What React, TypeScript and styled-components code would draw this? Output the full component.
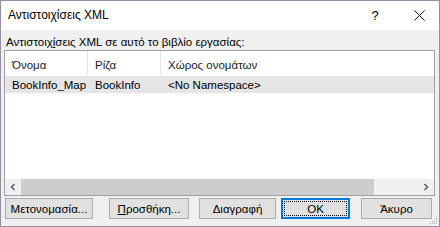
import * as React from "react";
import styled, { createGlobalStyle } from "styled-components";

const GlobalStyle = createGlobalStyle`
  html, body {
    margin: 0;
    padding: 0;
    background: #ffffff;
  }
  * {
    box-sizing: border-box;
  }
`;

const Window = styled.div`
  width: 440px;
  height: 227px;
  border: 1px solid #978ea6;
  display: flex;
  flex-direction: column;
  font-family: "Liberation Sans", Arial, sans-serif;
  font-size: 11.5px;
  color: #000;
  overflow: hidden;
  position: relative;
`;

const TitleBar = styled.div`
  height: 29px;
  background: #ffffff;
  display: flex;
  align-items: center;
  padding-left: 7px;
  flex-shrink: 0;
`;

const Title = styled.div`
  flex: 1;
  font-size: 12px;
  line-height: 1;
  padding-bottom: 1px;
`;

const TitleButton = styled.div<{ $w: number }>`
  width: ${(p) => p.$w}px;
  height: 29px;
  display: flex;
  align-items: center;
  justify-content: center;
  font-size: 13px;
`;

const Body = styled.div`
  flex: 1;
  background: #f0f0f0;
  display: flex;
  flex-direction: column;
  padding: 5px 4px 0 3px;
`;

const Label = styled.div`
  line-height: 15px;
  padding-left: 2px;
  height: 15px;
`;

const ListBox = styled.div`
  height: 146px;
  border: 1px solid #a0a0a0;
  background: #ffffff;
  display: flex;
  flex-direction: column;
`;

const Header = styled.div`
  display: flex;
  height: 24px;
  flex-shrink: 0;
`;

const HeaderCell = styled.div<{ $w?: number }>`
  ${(p) => (p.$w ? `width: ${p.$w}px;` : "flex: 1;")}
  border-right: 1px solid #e5e5e5;
  padding: 4px 0 0 7px;
  display: flex;
  align-items: center;
  color: #1a1a1a;
  &:last-child {
    border-right: none;
  }
`;

const Row = styled.div<{ $selected?: boolean }>`
  display: flex;
  height: 17px;
  margin-top: 1px;
  background: ${(p) => (p.$selected ? "#e5e5e5" : "transparent")};
`;

const Cell = styled.div<{ $w?: number }>`
  ${(p) => (p.$w ? `width: ${p.$w}px;` : "flex: 1;")}
  padding-left: 7px;
  display: flex;
  align-items: center;
  white-space: nowrap;
`;

const Spacer = styled.div`
  flex: 1;
`;

const HScroll = styled.div`
  height: 16px;
  display: flex;
  align-items: stretch;
  background: #f0f0f0;
  flex-shrink: 0;
`;

const ScrollArrow = styled.div`
  width: 16px;
  display: flex;
  align-items: center;
  justify-content: center;
`;

const Track = styled.div`
  flex: 1;
  display: flex;
  align-items: stretch;
`;

const Thumb = styled.div<{ $pct: number }>`
  width: ${(p) => p.$pct}%;
  background: #cdcdcd;
`;

const ButtonRow = styled.div`
  display: flex;
  margin-top: 2px;
  height: 21px;
`;

const Button = styled.div<{ $w: number; $ml: number; $default?: boolean }>`
  width: ${(p) => p.$w}px;
  margin-left: ${(p) => p.$ml}px;
  height: 21px;
  background: #e1e1e1;
  border: 1px solid ${(p) => (p.$default ? "#0078d7" : "#adadad")};
  display: flex;
  align-items: center;
  justify-content: center;
  position: relative;
  ${(p) =>
    p.$default
      ? `
    box-shadow: inset 0 0 0 1px #0078d7;
    &::after {
      content: "";
      position: absolute;
      left: 2px;
      top: 2px;
      right: 2px;
      bottom: 2px;
      border: 1px dotted #000;
    }
  `
      : ""}
`;

const Grip = styled.svg`
  position: absolute;
  right: 1px;
  bottom: 1px;
`;

function Arrow({ dir }: { dir: "left" | "right" }) {
  return (
    <svg width="6" height="8" viewBox="0 0 6 8">
      {dir === "left" ? (
        <path d="M4.5 1 L1.5 4 L4.5 7" stroke="#606060" strokeWidth="1.6" fill="none" />
      ) : (
        <path d="M1.5 1 L4.5 4 L1.5 7" stroke="#606060" strokeWidth="1.6" fill="none" />
      )}
    </svg>
  );
}

const gripDots = [
  [8, 2],
  [6, 4],
  [8, 4],
  [4, 6],
  [6, 6],
  [8, 6],
  [2, 8],
  [4, 8],
  [6, 8],
  [8, 8],
];

export default function App() {
  return (
    <>
      <GlobalStyle />
      <Window>
        <TitleBar>
          <Title>Αντιστοιχίσεις XML</Title>
          <TitleButton $w={48}>?</TitleButton>
          <TitleButton $w={40}>
            <svg width="11" height="11" viewBox="0 0 11 11">
              <path d="M0.5 0.5 L10.5 10.5 M10.5 0.5 L0.5 10.5" stroke="#111" strokeWidth="1" />
            </svg>
          </TitleButton>
        </TitleBar>
        <Body>
          <Label>
            Αντιστοιχ<u>ί</u>σεις XML σε αυτό το βιβλίο εργασίας:
          </Label>
          <ListBox>
            <Header>
              <HeaderCell $w={83}>Όνομα</HeaderCell>
              <HeaderCell $w={73}>Ρίζα</HeaderCell>
              <HeaderCell>Χώρος ονομάτων</HeaderCell>
            </Header>
            <Row $selected>
              <Cell $w={83}>BookInfo_Map</Cell>
              <Cell $w={73}>BookInfo</Cell>
              <Cell>&lt;No Namespace&gt;</Cell>
            </Row>
            <Spacer />
            <HScroll>
              <ScrollArrow>
                <Arrow dir="left" />
              </ScrollArrow>
              <Track>
                <Thumb $pct={89} />
              </Track>
              <ScrollArrow>
                <Arrow dir="right" />
              </ScrollArrow>
            </HScroll>
          </ListBox>
          <ButtonRow>
            <Button $w={88} $ml={1}>Μετονομασία...</Button>
            <Button $w={80} $ml={16}>
              <span>
                <u>Π</u>ροσθήκη...
              </span>
            </Button>
            <Button $w={77} $ml={10}>Διαγραφή</Button>
            <Button $w={69} $ml={5} $default>
              OK
            </Button>
            <Button $w={71} $ml={11}>Άκυρο</Button>
          </ButtonRow>
        </Body>
        <Grip width="10" height="10" viewBox="0 0 10 10">
          {gripDots.map(([x, y], i) => (
            <rect key={i} x={x} y={y} width="1" height="1" fill="#b0b0b0" />
          ))}
        </Grip>
      </Window>
    </>
  );
}
